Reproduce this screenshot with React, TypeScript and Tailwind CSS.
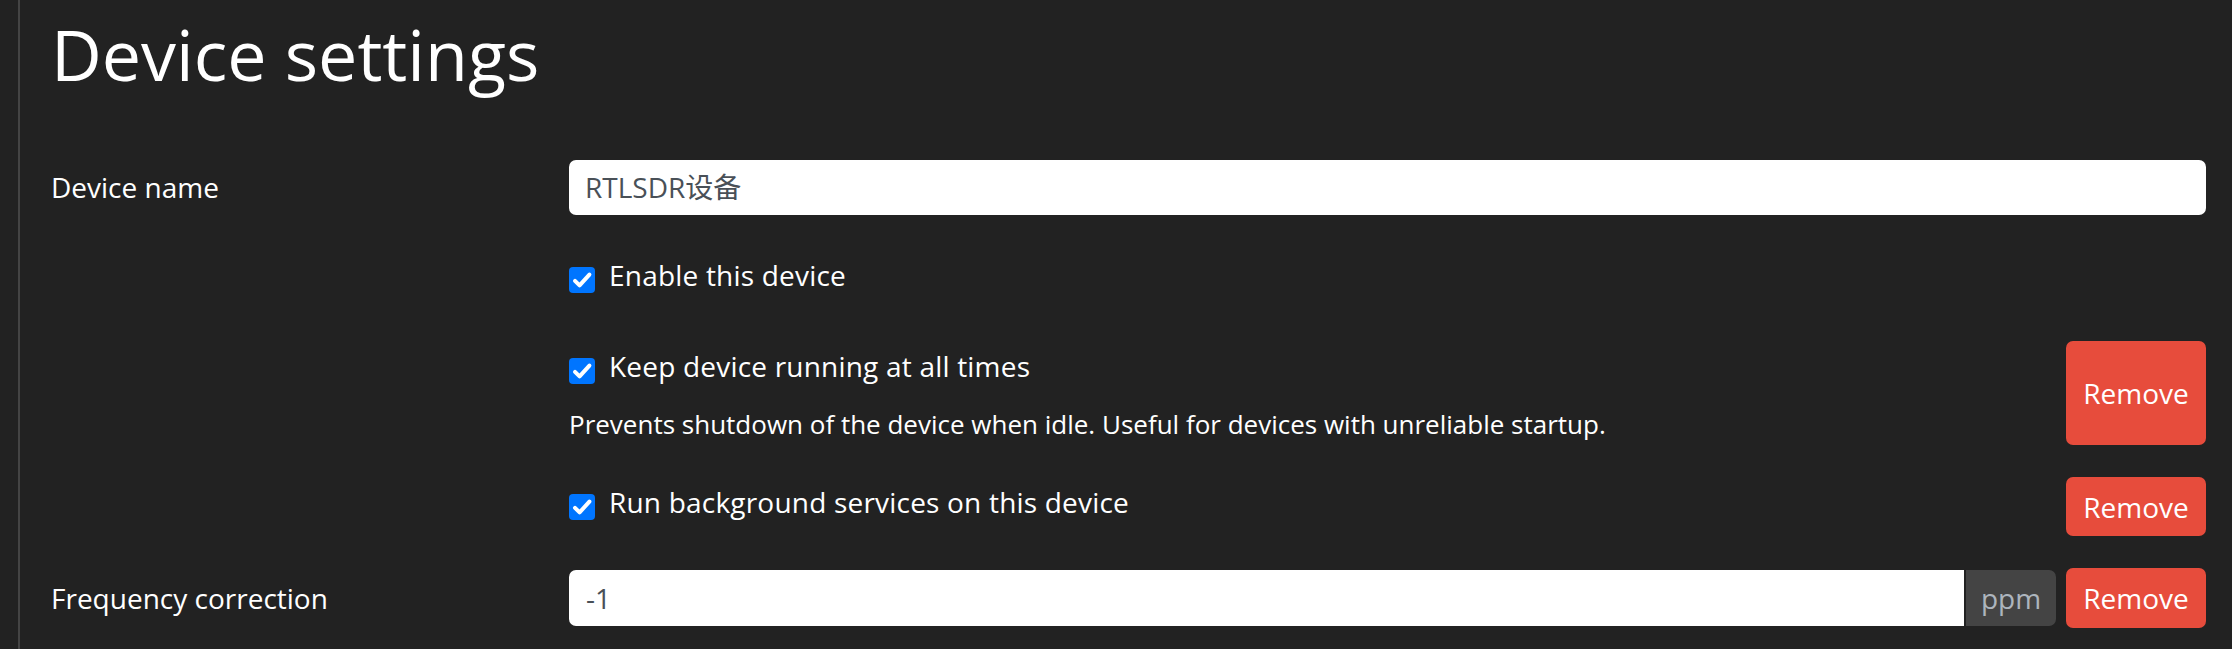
import React from 'react';

const font = "font-['Open_Sans','Noto_Sans_CJK_SC',sans-serif]";

const Check: React.FC = () => (
  <span className="mt-[12px] block h-[26px] w-[26px] shrink-0 rounded-[4px] bg-[#0075ff]">
    <svg width="26" height="26" viewBox="0 0 26 26" fill="none">
      <path d="M6 13.8 L10.6 18.4 L20.4 7.6" stroke="white" strokeWidth="4" strokeLinecap="round" strokeLinejoin="round" />
    </svg>
  </span>
);

const CheckRow: React.FC<{ label: string }> = ({ label }) => (
  <div className="flex items-start">
    <Check />
    <span className="ml-[14px] text-[28px] leading-[40px] tracking-[0.2px] text-white">{label}</span>
  </div>
);

const RemoveButton: React.FC<{ className?: string }> = ({ className = '' }) => (
  <button className={`w-[140px] shrink-0 rounded-[7px] bg-[#e74c3c] text-[28px] text-white ${className}`}>
    Remove
  </button>
);

const App: React.FC = () => {
  return (
    <div className={`min-h-screen w-full bg-[#222222] pl-[18px] ${font}`}>
      <div className="min-h-screen border-l-2 border-[#444444] pl-[31px] pr-[26px] pb-[20px]">
        <h1 className="pt-[14px] text-[70px] font-normal leading-[80px] text-white">Device settings</h1>

        {/* Device name */}
        <div className="mt-[66px] flex items-start">
          <label className="w-[518px] shrink-0 text-[28px] leading-[55px] text-white">Device name</label>
          <div className="h-[55px] flex-1 rounded-[7px] bg-white pl-[16px] text-[28px] leading-[55px] text-[#495057]">
            RTLSDR设备
          </div>
        </div>

        {/* Enable */}
        <div className="mt-[40px] flex">
          <div className="w-[518px] shrink-0" />
          <CheckRow label="Enable this device" />
        </div>

        {/* Keep running */}
        <div className="mt-[46px] flex h-[104px]">
          <div className="w-[518px] shrink-0" />
          <div className="flex-1 pt-[5px]">
            <CheckRow label="Keep device running at all times" />
            <p className="mt-[21px] text-[26px] leading-[34px] text-white">
              Prevents shutdown of the device when idle. Useful for devices with unreliable startup.
            </p>
          </div>
          <RemoveButton className="ml-[20px]" />
        </div>

        {/* Background services */}
        <div className="mt-[32px] flex h-[59px]">
          <div className="w-[518px] shrink-0" />
          <div className="flex-1 pt-[5px]">
            <CheckRow label="Run background services on this device" />
          </div>
          <RemoveButton className="ml-[20px]" />
        </div>

        {/* Frequency correction */}
        <div className="mt-[32px] flex h-[60px] items-center">
          <label className="w-[518px] shrink-0 text-[28px] leading-[56px] text-white">Frequency correction</label>
          <div className="flex h-[56px] flex-1">
            <div className="flex-1 rounded-l-[7px] bg-white pl-[17px] text-[28px] leading-[56px] text-[#495057]">-1</div>
            <div className="ml-[2px] w-[90px] rounded-r-[7px] bg-[#444444] text-center text-[28px] leading-[56px] text-[#adb5bd]">
              ppm
            </div>
          </div>
          <RemoveButton className="ml-[10px] h-[60px]" />
        </div>
      </div>
    </div>
  );
};

export default App;
